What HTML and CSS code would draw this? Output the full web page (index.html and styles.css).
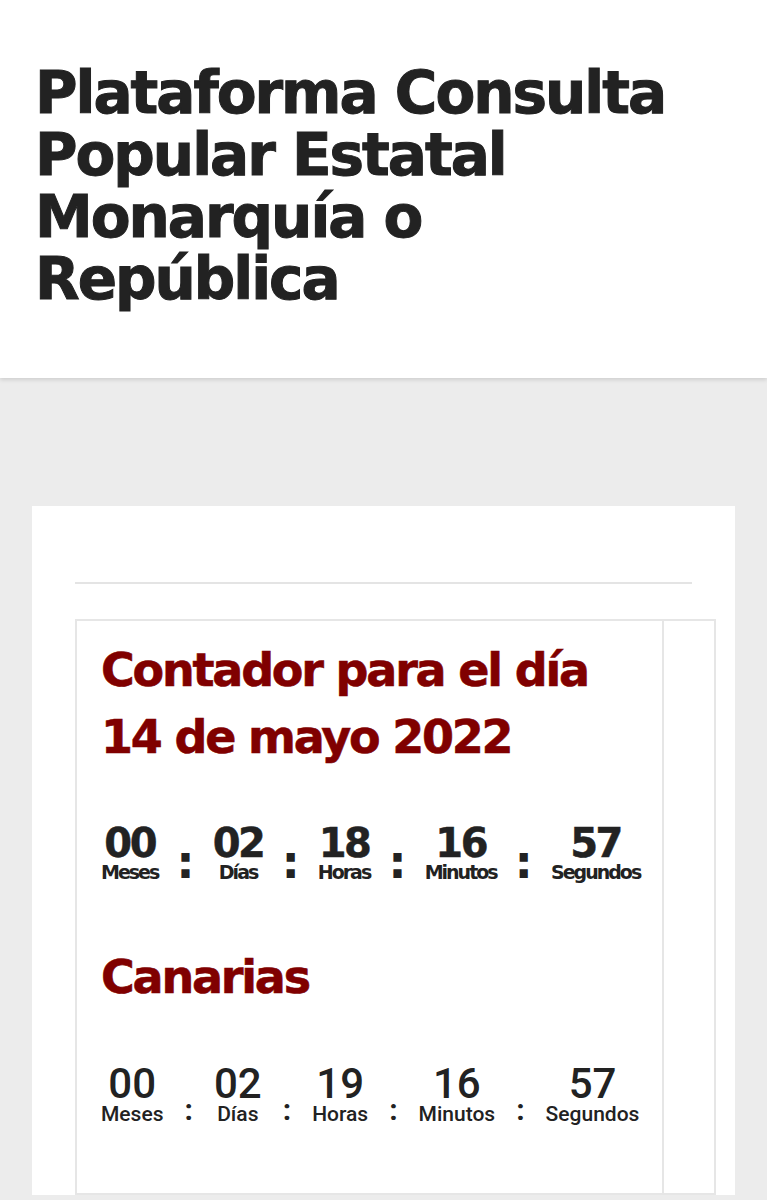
FILE: index.html
```html
<!DOCTYPE html>
<html lang="es">
<head>
    <meta charset="UTF-8">
    <meta name="viewport" content="width=device-width, initial-scale=1.0">
    <title>Plataforma Consulta Popular Estatal</title>
    <link rel="stylesheet" href="styles.css">
</head>
<body>
    <header class="site-header">
        <h1 class="site-title">Plataforma Consulta Popular Estatal Monarquía o República</h1>
    </header>

    <main class="content">
        <article class="card">
            <hr class="divider">
            <table class="layout">
                <tr>
                    <td class="main-col">
                        <h2 class="count-title">Contador para el día 14 de mayo 2022</h2>
                        <div class="countdown">
                            <div class="unit"><span class="num">00</span><span class="label">Meses</span></div>
                            <span class="sep">:</span>
                            <div class="unit"><span class="num">02</span><span class="label">Días</span></div>
                            <span class="sep">:</span>
                            <div class="unit"><span class="num">18</span><span class="label">Horas</span></div>
                            <span class="sep">:</span>
                            <div class="unit"><span class="num">16</span><span class="label">Minutos</span></div>
                            <span class="sep">:</span>
                            <div class="unit"><span class="num">57</span><span class="label">Segundos</span></div>
                        </div>

                        <h2 class="count-title">Canarias</h2>
                        <div class="countdown countdown-alt">
                            <div class="unit"><span class="num">00</span><span class="label">Meses</span></div>
                            <span class="sep">:</span>
                            <div class="unit"><span class="num">02</span><span class="label">Días</span></div>
                            <span class="sep">:</span>
                            <div class="unit"><span class="num">19</span><span class="label">Horas</span></div>
                            <span class="sep">:</span>
                            <div class="unit"><span class="num">16</span><span class="label">Minutos</span></div>
                            <span class="sep">:</span>
                            <div class="unit"><span class="num">57</span><span class="label">Segundos</span></div>
                        </div>
                    </td>
                    <td class="side-col"></td>
                </tr>
            </table>
        </article>
    </main>
</body>
</html>
```

FILE: styles.css
```css
body {
    margin: 0;
    background-color: #ececec;
    font-family: "DejaVu Sans", "Liberation Sans", sans-serif;
    color: #222;
}

.site-header {
    background-color: #fff;
    height: 378px;
    box-sizing: border-box;
    padding: 62px 35px 0 35px;
    box-shadow: 0 2px 4px rgba(0, 0, 0, 0.12);
}

.site-title {
    margin: 0;
    max-width: 680px;
    font-size: 58px;
    font-weight: bold;
    line-height: 62px;
    letter-spacing: -2px;
    color: #222;
    -webkit-text-stroke: 1px #222;
}

.content {
    padding: 128px 32px 0 32px;
}

.card {
    background-color: #fff;
    padding: 76px 19px 0 43px;
}

.divider {
    margin: 0 24px 35px 0;
    border: 0;
    border-top: 2px solid #e4e4e4;
}

.layout {
    width: 100%;
    table-layout: fixed;
    border-collapse: collapse;
    border: 2px solid #e6e6e6;
}

.main-col {
    vertical-align: top;
    padding: 16px 22px 68px 24px;
    border-right: 2px solid #e6e6e6;
}

.side-col {
    width: 48px;
}

.count-title {
    margin: 0;
    font-size: 46px;
    font-weight: bold;
    line-height: 67px;
    letter-spacing: -2.2px;
    color: #800000;
    -webkit-text-stroke: 0.6px #800000;
}

.countdown {
    display: flex;
    align-items: flex-end;
    margin: 54px 0 61px 0;
}

.unit {
    display: flex;
    flex-direction: column;
    align-items: center;
}

.num {
    font-size: 40px;
    font-weight: bold;
    line-height: 36px;
    letter-spacing: -2.5px;
    -webkit-text-stroke: 0.5px #222;
}

.label {
    font-size: 19px;
    font-weight: bold;
    line-height: 22px;
    letter-spacing: -2px;
}

.sep {
    margin: 0 18px -2px 18px;
    font-size: 46px;
    font-weight: bold;
    line-height: 46px;
}

.countdown-alt {
    margin: 54px 0 0 0;
    font-family: Roboto, "Liberation Sans", sans-serif;
}

.countdown-alt .num {
    font-size: 42px;
    font-weight: 500;
    line-height: 38px;
    letter-spacing: 0;
    -webkit-text-stroke: 0;
}

.countdown-alt .label {
    font-size: 21px;
    font-weight: 500;
    letter-spacing: 0;
}

.countdown-alt .sep {
    margin: 0 21px 0 21px;
    font-size: 30px;
    line-height: 30px;
}
```
